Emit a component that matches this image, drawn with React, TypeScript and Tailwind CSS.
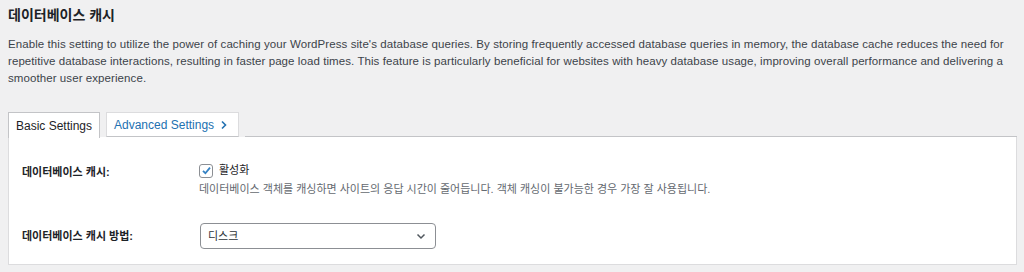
import React from "react";

export default function App() {
  const font = "font-['Liberation_Sans','Noto_Sans_CJK_KR',sans-serif]";
  return (
    <div className={`w-[1024px] h-[272px] overflow-hidden bg-[#f0f0f1] pl-[8px] pr-[7px] text-[#3c434a] ${font}`}>
      <h2 className="pt-[5px] text-[14px] leading-[20px] font-bold text-[#1d2327]">데이터베이스 캐시</h2>
      <p className="mt-[11px] text-[11.5px] leading-[17px] tracking-[0.08px] text-[#3c434a] pr-[2px]">
        Enable this setting to utilize the power of caching your WordPress site's database queries. By storing frequently accessed database queries in memory, the database cache reduces the need for repetitive database interactions, resulting in faster page load times. This feature is particularly beneficial for websites with heavy database usage, improving overall performance and delivering a smoother user experience.
      </p>
      <div className="mt-[25px] flex gap-[6px] h-[25px] relative z-10">
        <div className="w-[92px] h-[26px] bg-white border border-b-0 border-[#c3c4c7] flex items-center justify-center text-[12px] text-[#1d2327]">
          Basic Settings
        </div>
        <div className="w-[133px] h-[25px] bg-white border border-[#dcdcde] border-b-[#c3c4c7] flex items-center pl-[7px] text-[12px] text-[#2271b1] gap-[6px]">
          Advanced Settings
          <svg width="8" height="10" viewBox="0 0 8 10" fill="none" stroke="#2271b1" strokeWidth="1.6">
            <path d="M2 1.5 L5.5 5 L2 8.5" />
          </svg>
        </div>
        <div className="flex-1 border-b border-[#c3c4c7]" />
      </div>
      <div className="h-[128px] bg-white border border-t-0 border-[#dcdcde] px-[13px]">
        <div className="flex pt-[26px]">
          <div className="w-[177px] pt-[2px] text-[11px] font-bold text-[#1d2327] leading-[15px]">데이터베이스 캐시:</div>
          <div>
            <div className="flex items-center gap-[6px] h-[15px]">
              <div className="w-[14px] h-[14px] border border-[#8c8f94] rounded-[3px] bg-white flex items-center justify-center">
                <svg width="11" height="11" viewBox="0 0 11 11" fill="none" stroke="#3582c4" strokeWidth="1.8">
                  <path d="M2 5.8 L4.4 8.2 L9 2.6" />
                </svg>
              </div>
              <span className="text-[11px] text-[#1d2327]">활성화</span>
            </div>
            <div className="mt-[4px] text-[11px] leading-[15px] text-[#646970]">
              데이터베이스 객체를 캐싱하면 사이트의 응답 시간이 줄어듭니다. 객체 캐싱이 불가능한 경우 가장 잘 사용됩니다.
            </div>
          </div>
        </div>
        <div className="flex items-center mt-[26px]">
          <div className="w-[178px] text-[11px] font-bold text-[#1d2327]">데이터베이스 캐시 방법:</div>
          <div className="w-[236px] h-[26px] border border-[#8c8f94] rounded-[4px] bg-white flex items-center justify-between pl-[7px] pr-[9px]">
            <span className="text-[11px] text-[#2c3338]">디스크</span>
            <svg width="10" height="7" viewBox="0 0 10 7" fill="none" stroke="#50575e" strokeWidth="1.5">
              <path d="M1.5 1.5 L5 5 L8.5 1.5" />
            </svg>
          </div>
        </div>
      </div>
    </div>
  );
}
